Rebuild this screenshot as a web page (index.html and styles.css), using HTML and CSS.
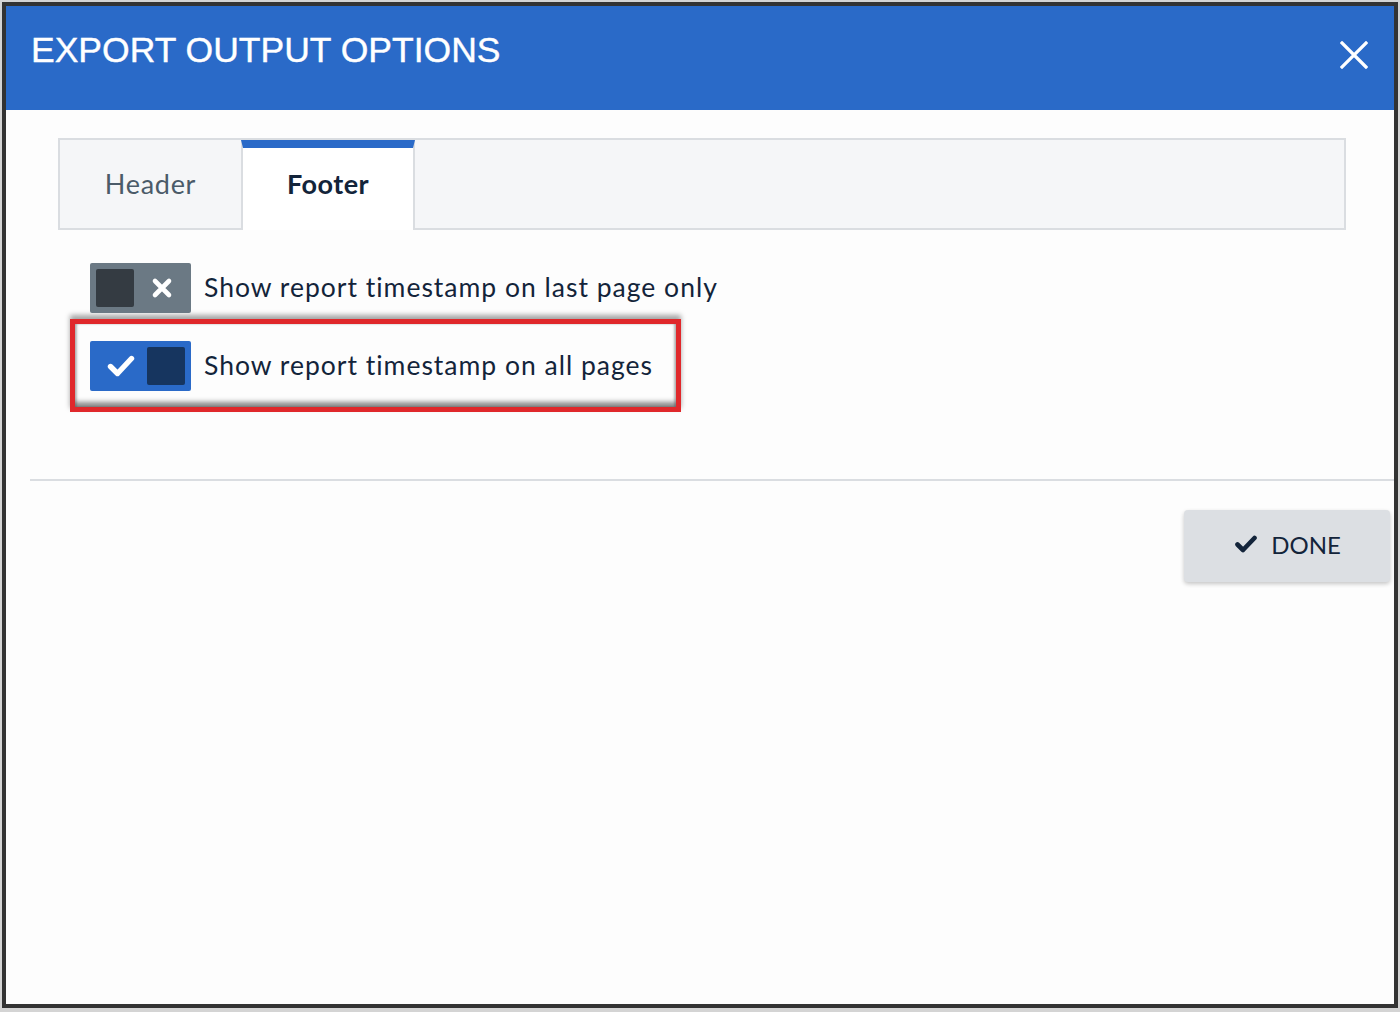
FILE: index.html
```html
<!DOCTYPE html>
<html>
<head>
<meta charset="utf-8">
<link rel="stylesheet" href="styles.css">
</head>
<body>
<div class="modal">
  <header class="modal-header">
    <h1 class="title">EXPORT OUTPUT OPTIONS</h1>
    <button class="close" aria-label="Close">
      <svg width="28" height="28" viewBox="0 0 28 28"><path d="M2 2 L26 26 M26 2 L2 26" stroke="#fff" stroke-width="3.2" stroke-linecap="square" fill="none"/></svg>
    </button>
  </header>
  <div class="modal-body">
    <div class="tabs">
      <div class="tab">Header</div>
      <div class="tab active">Footer</div>
      <div class="tab-fill"></div>
    </div>
    <div class="options">
      <div class="option">
        <span class="toggle off">
          <span class="knob"></span>
          <svg class="ticon" width="22" height="22" viewBox="0 0 22 22"><path d="M4 4 L18 18 M18 4 L4 18" stroke="#fff" stroke-width="4.6" stroke-linecap="round" fill="none"/></svg>
        </span>
        <span class="label">Show report timestamp on last page only</span>
      </div>
      <div class="option">
        <span class="highlight"></span>
        <span class="toggle on">
          <svg class="ticon" width="28" height="24" viewBox="0 0 28 24"><path d="M3.5 12.5 L10.5 19.5 L24.5 4.5" stroke="#fff" stroke-width="5.4" stroke-linecap="round" stroke-linejoin="round" fill="none"/></svg>
          <span class="knob"></span>
        </span>
        <span class="label">Show report timestamp on all pages</span>
      </div>
    </div>
  </div>
  <div class="divider"></div>
  <div class="modal-footer">
    <button class="done">
      <svg width="22" height="18" viewBox="0 0 22 18"><path d="M2.5 9.5 L8 15 L19.5 3" stroke="#13243a" stroke-width="4.6" stroke-linecap="round" stroke-linejoin="round" fill="none"/></svg>
      <span>DONE</span>
    </button>
  </div>
</div>
</body>
</html>
```
FILE: styles.css
```css
html, body {
  margin: 0;
  padding: 0;
}
body {
  background: #d4d4d4;
  width: 1400px;
  height: 1012px;
  overflow: hidden;
  font-family: Lato, "Noto Sans", sans-serif;
}
.modal {
  margin: 2px 0 0 2px;
  width: 1388px;
  height: 998px;
  border: 4px solid #333333;
  background: #fdfdfd;
  display: flex;
  flex-direction: column;
}
.modal-header {
  height: 104px;
  background: #2a6ac8;
  display: flex;
  align-items: center;
  justify-content: space-between;
  padding: 0 26px 0 25px;
  box-sizing: border-box;
}
.title {
  margin: 0;
  color: #ffffff;
  font-family: "Liberation Sans", Arial, sans-serif;
  font-weight: 400;
  font-size: 35.5px;
  position: relative;
  top: -8px;
  -webkit-text-stroke: 0.4px #ffffff;
}
.close {
  background: none;
  border: 0;
  padding: 0;
  margin: 0;
  width: 28px;
  height: 28px;
  display: flex;
  cursor: pointer;
  position: relative;
  top: -3px;
}
.modal-body {
  padding: 28px 48px 0 52px;
}
.tabs {
  display: flex;
  height: 92px;
  box-sizing: border-box;
  border: 2px solid #dadde1;
  background: #f5f6f8;
}
.tab {
  width: 181px;
  display: flex;
  align-items: center;
  justify-content: center;
  font-size: 27px;
  letter-spacing: 0.7px;
  color: #4b5b69;
  padding-bottom: 2px;
  box-sizing: border-box;
}
.tab.active {
  width: 174px;
  background: #ffffff;
  color: #13243a;
  font-weight: 700;
  letter-spacing: 0.5px;
  border-left: 2px solid #dadde1;
  border-right: 2px solid #dadde1;
  border-top: 8px solid #2a6ac8;
  margin-bottom: -2px;
  padding-bottom: 12px;
}
.tab-fill {
  flex: 1;
}
.options {
  padding: 33px 0 0 32px;
  display: flex;
  flex-direction: column;
  gap: 28px;
}
.option {
  position: relative;
  display: flex;
  align-items: center;
  gap: 13px;
  height: 50px;
}
.toggle {
  width: 101px;
  height: 50px;
  box-sizing: border-box;
  border-radius: 2px;
  display: flex;
  align-items: center;
  justify-content: space-between;
  padding: 0 6px;
  position: relative;
  z-index: 1;
}
.toggle.off {
  background: #6b7984;
  padding-right: 18px;
}
.toggle.on {
  background: #2a6ac8;
  padding-left: 17px;
}
.knob {
  width: 38px;
  height: 38px;
  border-radius: 2px;
}
.toggle.off .knob {
  background: #343b42;
}
.toggle.on .knob {
  background: #16355f;
}
.label {
  font-size: 26.5px;
  letter-spacing: 1px;
  color: #13243a;
  position: relative;
  top: -1px;
  z-index: 1;
}
.highlight {
  position: absolute;
  left: -20px;
  top: -22px;
  width: 611px;
  height: 93px;
  box-sizing: border-box;
  border: 5px solid #e0282b;
  box-shadow: 0 -4px 5px rgba(0, 0, 0, 0.35),
    inset 0 -6px 5px -1px rgba(0, 0, 0, 0.45),
    inset 2px 0 2px rgba(0, 0, 0, 0.18),
    inset -2px 0 2px rgba(0, 0, 0, 0.18);
}
.divider {
  margin: 88px 0 0 24px;
  height: 2px;
  background: #dadde1;
}
.modal-footer {
  display: flex;
  justify-content: flex-end;
  padding: 29px 4px 0 0;
}
.done {
  width: 206px;
  height: 72px;
  border: 0;
  border-radius: 4px;
  background: #dcdfe3;
  box-shadow: 0 2px 4px rgba(0, 0, 0, 0.22);
  display: flex;
  align-items: center;
  justify-content: center;
  gap: 14px;
  font-family: Lato, "Noto Sans", sans-serif;
  font-size: 24px;
  color: #13243a;
  padding: 0 0 4px 2px;
  cursor: pointer;
}
```
